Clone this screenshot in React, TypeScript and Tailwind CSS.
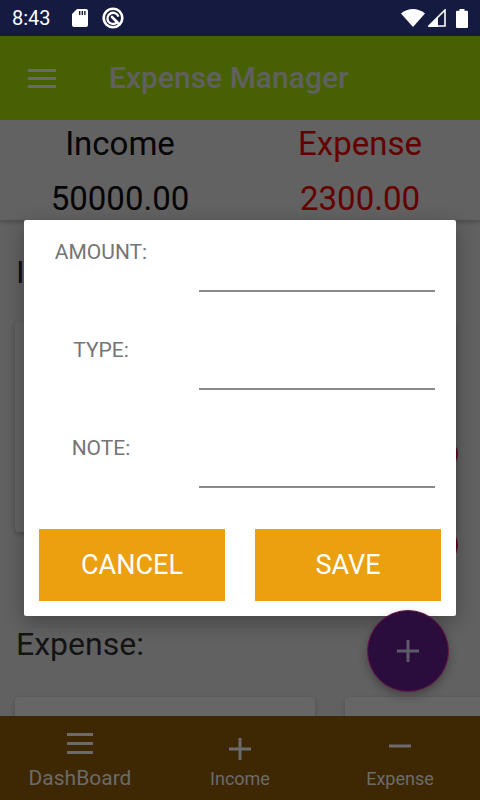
import React from "react";

const font = { fontFamily: "Roboto, 'Noto Sans', sans-serif" };

function StatusBar() {
  return (
    <div className="h-[36px] bg-[#151a40] flex items-center px-[12px] text-white shrink-0">
      <span className="text-[20px] leading-none">8:43</span>
      <svg className="ml-[21px]" width="16" height="18" viewBox="0 0 16 18">
        <path d="M5 0h9a2 2 0 0 1 2 2v14a2 2 0 0 1-2 2H2a2 2 0 0 1-2-2V5z" fill="white" />
        <rect x="7" y="2" width="1.4" height="4" fill="#151a40" />
        <rect x="9.6" y="2" width="1.4" height="4" fill="#151a40" />
        <rect x="12.2" y="2" width="1.4" height="4" fill="#151a40" />
      </svg>
      <svg className="ml-[14px]" width="22" height="22" viewBox="0 0 22 22">
        <circle cx="11" cy="11" r="9.3" fill="none" stroke="white" strokeWidth="2.6" />
        <path d="M14.8 15.6A5.6 5.6 0 1 1 16.4 9.6" fill="none" stroke="white" strokeWidth="2.3" />
        <path d="M10 10l7 7" stroke="white" strokeWidth="2.6" strokeLinecap="round" />
      </svg>
      <div className="flex-1" />
      <svg width="24" height="18" viewBox="0 0 24 18">
        <path d="M0 4.5C3.5 1.6 7.6 0 12 0s8.5 1.6 12 4.5L12 18z" fill="white" />
      </svg>
      <svg className="ml-[3px]" width="18" height="18" viewBox="0 0 18 18">
        <path d="M17 1v16H1z" fill="none" stroke="white" strokeWidth="1.6" />
        <path d="M10 8v10H0z" fill="white" />
      </svg>
      <svg className="ml-[10px]" width="12" height="19" viewBox="0 0 12 19">
        <rect x="3.5" y="0" width="5" height="2" fill="white" />
        <rect x="0" y="1.8" width="12" height="17.2" rx="1" fill="white" />
      </svg>
    </div>
  );
}

function AppBar() {
  return (
    <div className="h-[84px] bg-[#486004] flex items-center shrink-0">
      <div className="ml-[28px] w-[28px] flex flex-col gap-[5px]">
        <div className="h-[3px] bg-[#696969]" />
        <div className="h-[3px] bg-[#696969]" />
        <div className="h-[3px] bg-[#696969]" />
      </div>
      <div className="ml-[53px] text-[30px] leading-[36px] font-medium text-[#606060]">Expense Manager</div>
    </div>
  );
}

function Summary() {
  return (
    <div className="h-[100px] bg-[#626262] grid grid-cols-2 shrink-0 relative z-10 shadow-[0_3px_4px_rgba(0,0,0,0.18)]">
      <div className="flex flex-col items-center pt-[5px] text-[33px] leading-[38px] text-[#050505]">
        <span>Income</span>
        <span className="mt-[17px]">50000.00</span>
      </div>
      <div className="flex flex-col items-center pt-[5px] text-[33px] leading-[38px] text-[#640000]">
        <span>Expense</span>
        <span className="mt-[17px]">2300.00</span>
      </div>
    </div>
  );
}

function Main() {
  return (
    <div className="flex-1 overflow-hidden pt-[33px] flex flex-col relative">
      <div className="pl-[16px] text-[32px] leading-[38px] text-[#111]">Income:</div>
      <div className="mt-[31px] ml-[15px] mr-[24px] h-[210px] rounded-[4px] bg-[#646464] shadow-[0_2px_5px_rgba(0,0,0,0.25)] shrink-0" />
      <div className="absolute left-[430px] top-[220px] w-[28px] h-[28px] rounded-full bg-[#5a0a22]" />
      <div className="absolute left-[420px] top-[306px] w-[38px] h-[38px] rounded-full bg-[#5a0a22]" />
      <div className="mt-[93px] pl-[16px] text-[32px] leading-[38px] text-[#141414]">Expense:</div>
      <div className="mt-[34px] flex gap-[30px] pl-[15px] shrink-0">
        <div className="w-[300px] h-[120px] rounded-[4px] bg-[#666] shadow-[0_2px_5px_rgba(0,0,0,0.2)] shrink-0" />
        <div className="w-[300px] h-[120px] rounded-[4px] bg-[#666] shadow-[0_2px_5px_rgba(0,0,0,0.2)] shrink-0" />
      </div>
    </div>
  );
}

function BottomNav() {
  return (
    <div className="h-[84px] bg-[#3e2804] grid grid-cols-3 shrink-0 relative z-10 text-[#6b6b6b]">
      <div className="flex flex-col items-center pt-[17px]">
        <div className="w-[26px] flex flex-col gap-[6px]">
          <div className="h-[3px] bg-[#6b6b6b]" />
          <div className="h-[3px] bg-[#6b6b6b]" />
          <div className="h-[3px] bg-[#6b6b6b]" />
        </div>
        <span className="mt-[12px] text-[21px] leading-[24px]">DashBoard</span>
      </div>
      <div className="flex flex-col items-center pt-[22px]">
        <svg width="22" height="22" viewBox="0 0 22 22">
          <path d="M11 0v22M0 11h22" stroke="#6b6b6b" strokeWidth="3" />
        </svg>
        <span className="mt-[8px] text-[18px] leading-[22px]">Income</span>
      </div>
      <div className="flex flex-col items-center pt-[22px]">
        <svg width="22" height="22" viewBox="0 0 22 22">
          <path d="M0 8h22" stroke="#6b6b6b" strokeWidth="3" />
        </svg>
        <span className="mt-[8px] text-[18px] leading-[22px]">Expense</span>
      </div>
    </div>
  );
}

function Field({ label }: { label: string }) {
  return (
    <div className="grid grid-cols-[124px_236px] gap-x-[36px] h-[54px]">
      <div className="pt-[2px] text-center text-[21px] leading-[25px] text-[#757575]">{label}</div>
      <div className="flex flex-col justify-end">
        <div className="h-[2px] bg-[#8a8a8a]" />
      </div>
    </div>
  );
}

function Dialog() {
  return (
    <div className="absolute left-[24px] top-[220px] w-[432px] h-[396px] bg-white rounded-[2px] shadow-[0_6px_20px_rgba(0,0,0,0.3)] z-20 px-[15px] pt-[18px] flex flex-col">
      <div className="flex flex-col gap-[44px]">
        <Field label="AMOUNT:" />
        <Field label="TYPE:" />
        <Field label="NOTE:" />
      </div>
      <div className="mt-[41px] grid grid-cols-2 gap-[30px]">
        <button className="h-[72px] bg-[#eba010] text-white text-[27px] leading-none">CANCEL</button>
        <button className="h-[72px] bg-[#eba010] text-white text-[27px] leading-none">SAVE</button>
      </div>
    </div>
  );
}

function Fab() {
  return (
    <div className="absolute left-[367px] top-[610px] w-[82px] h-[82px] rounded-full bg-[#2a0c3d] border border-[#6a1646] shadow-[0_4px_10px_rgba(0,0,0,0.3)] z-30 flex items-center justify-center">
      <svg width="22" height="22" viewBox="0 0 22 22">
        <path d="M11 0v22M0 11h22" stroke="#5d5b6b" strokeWidth="3" />
      </svg>
    </div>
  );
}

export default function App() {
  return (
    <div style={font} className="relative w-[480px] h-[800px] overflow-hidden bg-[#616161] flex flex-col">
      <StatusBar />
      <AppBar />
      <Summary />
      <Main />
      <BottomNav />
      <Dialog />
      <Fab />
    </div>
  );
}
